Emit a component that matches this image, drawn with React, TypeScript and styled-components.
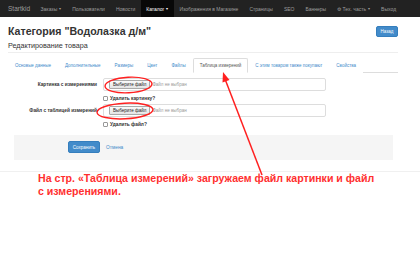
import styled, { createGlobalStyle } from 'styled-components';

const GlobalStyle = createGlobalStyle`
  body {
    margin: 0;
    background: #fff;
    color: #333;
    font-family: "Liberation Sans", Arial, sans-serif;
  }
`;

const Page = styled.div`
  position: relative;
  width: 420px;
  height: 280px;
  overflow: hidden;
`;

const Navbar = styled.nav`
  display: flex;
  align-items: stretch;
  height: 17px;
  padding: 0 22px 0 8px;
  background: #222;
  font-size: 5px;
  color: #9d9d9d;
`;

const Brand = styled.div`
  display: flex;
  align-items: center;
  font-size: 6.5px;
  margin-right: 5px;
`;

const NavItem = styled.div<{ $active?: boolean; $push?: boolean }>`
  display: flex;
  align-items: center;
  padding: 0 5.5px;
  white-space: nowrap;
  background: ${(p) => (p.$active ? '#080808' : 'transparent')};
  color: ${(p) => (p.$active ? '#fff' : '#9d9d9d')};
  margin-left: ${(p) => (p.$push ? 'auto' : '0')};
`;

const Caret = styled.span`
  margin-left: 2px;
  font-size: 4px;
`;

const Container = styled.div`
  width: 390px;
  margin-left: 8px;
`;

const Header = styled.div`
  display: flex;
  justify-content: space-between;
  align-items: flex-start;
  padding-top: 8px;
`;

const Title = styled.h1`
  margin: 0;
  font-size: 10.6px;
  font-weight: bold;
  line-height: 13px;
  color: #333;
`;

const Subtitle = styled.div`
  margin-top: 3px;
  font-size: 7.2px;
  line-height: 9px;
  color: #333;
`;

const Button = styled.div<{ $w: number }>`
  display: flex;
  align-items: center;
  justify-content: center;
  width: ${(p) => p.$w}px;
  height: 11px;
  background: #428bca;
  border: 1px solid #357ebd;
  border-radius: 2px;
  color: #fff;
  font-size: 4.5px;
  box-sizing: border-box;
`;

const BackButton = styled(Button)`
  margin-top: 1px;
`;

const Rule = styled.div`
  height: 1px;
  background: #eee;
  margin-top: 2px;
`;

const Tabs = styled.div`
  display: flex;
  margin-top: 5px;
  height: 14px;
  border-bottom: 1px solid #ddd;
`;

const Tab = styled.div<{ $active?: boolean }>`
  display: flex;
  align-items: center;
  padding: 0 6px;
  margin-bottom: -1px;
  font-size: 4.5px;
  white-space: nowrap;
  color: ${(p) => (p.$active ? '#555' : '#428bca')};
  background: #fff;
  border: 1px solid ${(p) => (p.$active ? '#ddd' : 'transparent')};
  border-bottom-color: ${(p) => (p.$active ? '#fff' : 'transparent')};
  border-radius: 2px 2px 0 0;
`;

const Form = styled.div`
  padding-top: 5px;
`;

const Row = styled.div`
  display: grid;
  grid-template-columns: 89px 223px;
  column-gap: 6px;
`;

const Label = styled.div`
  text-align: right;
  font-size: 4.8px;
  font-weight: bold;
  padding-top: 4px;
  white-space: nowrap;
`;

const FileBox = styled.div`
  display: flex;
  align-items: center;
  height: 13px;
  padding: 0 5px;
  border: 1px solid #ddd;
  border-radius: 2px;
  box-sizing: border-box;
`;

const FileButton = styled.div`
  display: flex;
  align-items: center;
  height: 7px;
  padding: 0 3px;
  border: 1px solid #aaa;
  border-radius: 1px;
  background: linear-gradient(#fafafa, #e4e4e4);
  font-size: 4.5px;
  color: #222;
`;

const NoFile = styled.span`
  margin-left: 2px;
  font-size: 4.5px;
  color: #999;
`;

const CheckRow = styled.div`
  display: flex;
  align-items: center;
  gap: 2px;
  height: 6px;
  margin: 4px 0 3px 95px;
  font-size: 4.8px;
  font-weight: bold;
  color: #333;
`;

const Box = styled.span`
  width: 3px;
  height: 3px;
  border: 1px solid #999;
  border-radius: 1px;
  background: #fff;
`;

const Actions = styled.div`
  display: flex;
  align-items: center;
  gap: 6px;
  margin: 8px 5px 0 6px;
  padding: 6px 0 7px 54px;
  background: #f5f5f5;
`;

const SaveButton = styled(Button)`
  height: 12px;
`;

const CancelLink = styled.span`
  font-size: 4.8px;
  color: #428bca;
`;

const FooterRule = styled.div`
  height: 1px;
  background: #f0f0f0;
  margin-top: 11px;
`;

const Note = styled.div`
  margin: 0 0 0 38px;
  width: 340px;
  font-size: 10.6px;
  line-height: 13px;
  font-weight: bold;
  color: #ff2f2f;
`;

const Overlay = styled.svg`
  position: absolute;
  left: 0;
  top: 0;
  pointer-events: none;
`;

export default function App() {
  return (
    <Page>
      <GlobalStyle />
      <Navbar>
        <Brand>Startkid</Brand>
        <NavItem>Заказы<Caret>▾</Caret></NavItem>
        <NavItem>Пользователи</NavItem>
        <NavItem>Новости</NavItem>
        <NavItem $active>Каталог<Caret>▾</Caret></NavItem>
        <NavItem>Изображения в Магазине</NavItem>
        <NavItem>Страницы</NavItem>
        <NavItem>SEO</NavItem>
        <NavItem>Баннеры</NavItem>
        <NavItem>⚙ Тех. часть<Caret>▾</Caret></NavItem>
        <NavItem $push>Выход</NavItem>
      </Navbar>
      <Container>
        <Header>
          <div>
            <Title>Категория "Водолазка д/м"</Title>
            <Subtitle>Редактирование товара</Subtitle>
          </div>
          <BackButton $w={22}>Назад</BackButton>
        </Header>
        <Rule />
        <Tabs>
          <Tab>Основые данные</Tab>
          <Tab>Дополнительные</Tab>
          <Tab>Размеры</Tab>
          <Tab>Цвет</Tab>
          <Tab>Файлы</Tab>
          <Tab $active>Таблица измерений</Tab>
          <Tab>С этим товаром также покупают</Tab>
          <Tab>Свойства</Tab>
        </Tabs>
        <Form>
          <Row>
            <Label>Картинка с измерениями</Label>
            <FileBox>
              <FileButton>Выберите файл</FileButton>
              <NoFile>Файл не выбран</NoFile>
            </FileBox>
          </Row>
          <CheckRow><Box />Удалить картинку?</CheckRow>
          <Row>
            <Label>Файл с таблицей измерений</Label>
            <FileBox>
              <FileButton>Выберите файл</FileButton>
              <NoFile>Файл не выбран</NoFile>
            </FileBox>
          </Row>
          <CheckRow><Box />Удалить файл?</CheckRow>
          <Actions>
            <SaveButton $w={32}>Сохранить</SaveButton>
            <CancelLink>Отмена</CancelLink>
          </Actions>
        </Form>
      </Container>
      <FooterRule />
      <Note>На стр. «Таблица измерений» загружаем файл картинки и файл с измерениями.</Note>
      <Overlay width="420" height="280" viewBox="0 0 420 280">
        <g fill="none" stroke="#ff2020" strokeWidth="1.4">
          <ellipse cx="128.5" cy="85" rx="23.5" ry="7.8" transform="rotate(-3 128.5 85)" />
          <ellipse cx="125" cy="111" rx="28" ry="7.8" transform="rotate(-3 125 111)" />
          <line x1="262" y1="175" x2="225" y2="79" strokeWidth="1.5" />
        </g>
        <polygon points="223,72 229.5,80 222.5,82.5" fill="#ff2020" />
      </Overlay>
    </Page>
  );
}
